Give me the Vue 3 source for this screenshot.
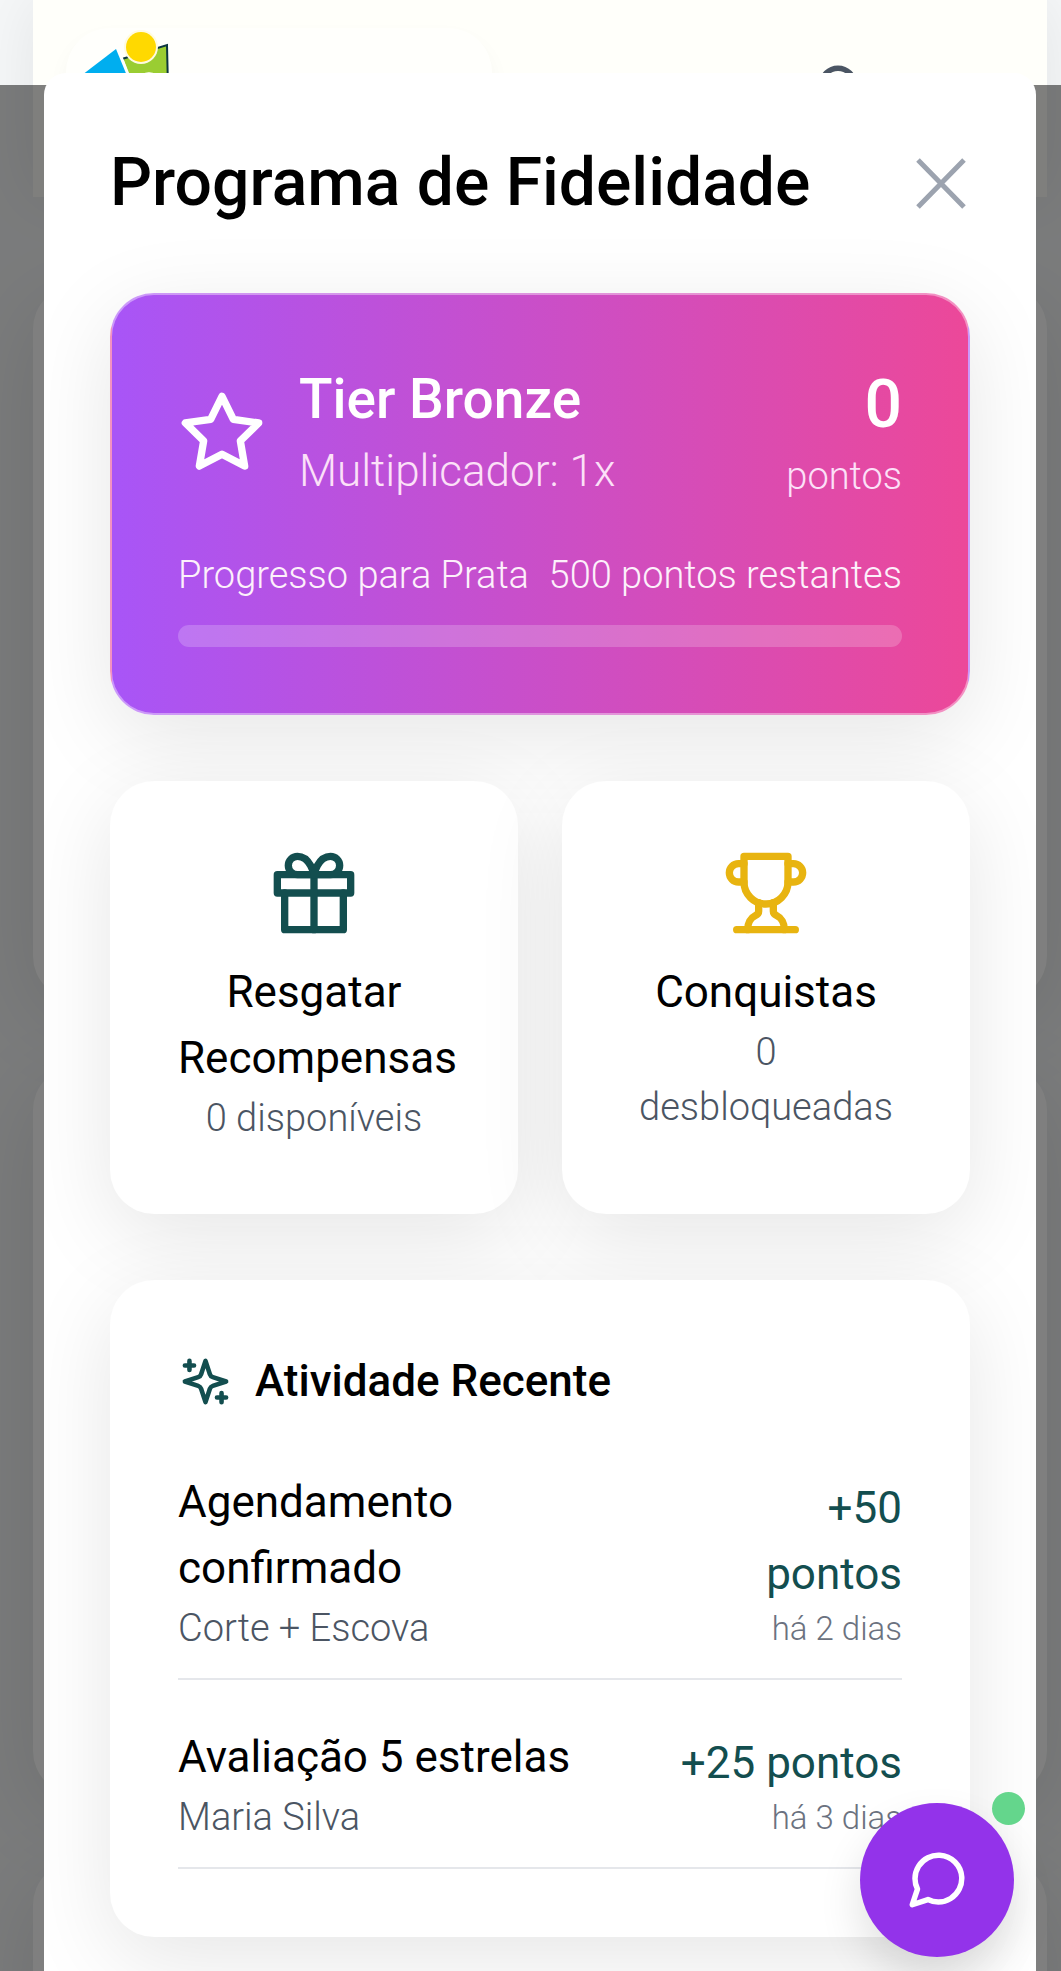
<script setup>
const activities = [
  { title: 'Agendamento confirmado', detail: 'Corte + Escova', points: '+50 pontos', when: 'há 2 dias' },
  { title: 'Avaliação 5 estrelas', detail: 'Maria Silva', points: '+25 pontos', when: 'há 3 dias' },
]
const progress = 0
</script>

<template>
  <div class="screen">
    <div class="page" aria-hidden="true">
      <header class="page-header">
        <div class="logo-card">
          <svg class="logo" viewBox="0 0 110 60">
            <path d="M-17 60 L34 21 L50 60 Z" fill="#00aeef" />
            <path d="M41 30 L85 17 V60 H52 Z" fill="#9acd32" />
            <path d="M40 31 L85 17 L86 60" fill="none" stroke="#0b3540" stroke-width="2" />
            <path d="M36 20 L52 60" stroke="#fff" stroke-width="2" />
            <circle cx="59" cy="19" r="17" fill="#fffbe0" />
            <circle cx="59" cy="19" r="15" fill="#ffd900" />
            <circle cx="67" cy="54" r="10" fill="#f0f8d8" />
          </svg>
        </div>
        <svg class="user" viewBox="0 0 24 24" fill="none" stroke="#4b5563" stroke-width="1.5" stroke-linecap="round">
          <circle cx="12" cy="7" r="4.5" />
          <path d="M19 21v-2a4 4 0 0 0-4-4H9a4 4 0 0 0-4 4v2" />
        </svg>
      </header>
      <section class="page-card first"></section>
      <section class="page-card second"></section>
      <section class="page-card third"></section>
    </div>
    <div class="overlay"></div>

    <main class="dialog" role="dialog" aria-labelledby="dialog-title">
      <div class="dialog-header">
        <h1 id="dialog-title">Programa de Fidelidade</h1>
        <button class="close" type="button" aria-label="Fechar">
          <svg viewBox="0 0 58 68" fill="none" stroke="#9ca3af" stroke-width="5">
            <path d="M6 11 L52 58 M52 11 L6 58" />
          </svg>
        </button>
      </div>

      <section class="card tier">
        <div class="tier-top">
          <div class="tier-info">
            <svg class="icon-lg" viewBox="0 0 24 24" fill="none" stroke="currentColor" stroke-width="2" stroke-linecap="round" stroke-linejoin="round">
              <polygon points="12 2 15.09 8.26 22 9.27 17 14.14 18.18 21.02 12 17.77 5.82 21.02 7 14.14 2 9.27 8.91 8.26 12 2" />
            </svg>
            <div>
              <h2>Tier Bronze</h2>
              <p class="multiplier">Multiplicador: 1x</p>
            </div>
          </div>
          <div class="score">
            <div class="score-value">0</div>
            <div class="score-label">pontos</div>
          </div>
        </div>
        <div class="progress-text">
          <span>Progresso para Prata</span>
          <span>500 pontos restantes</span>
        </div>
        <div class="track"><div class="fill" :style="{ width: progress + '%' }"></div></div>
      </section>

      <div class="tiles">
        <button class="card tile" type="button">
          <svg class="icon-lg teal" viewBox="0 0 24 24" fill="none" stroke="currentColor" stroke-width="2" stroke-linecap="round" stroke-linejoin="round">
            <polyline points="20 12 20 22 4 22 4 12" />
            <rect x="2" y="7" width="20" height="5" />
            <path d="M12 22V7" />
            <path d="M12 7H7.5a2.5 2.5 0 0 1 0-5C11 2 12 7 12 7z" />
            <path d="M12 7h4.500a2.500 2.500 0 0 0 0-5C13 2 12 7 12 7z" />
          </svg>
          <span class="tile-title">Resgatar Recompensas</span>
          <span class="tile-note">0 disponíveis</span>
        </button>
        <button class="card tile" type="button">
          <svg class="icon-lg gold" viewBox="0 0 24 24" fill="none" stroke="currentColor" stroke-width="2" stroke-linecap="round" stroke-linejoin="round">
            <path d="M6 9H4.500a2.500 2.500 0 0 1 0-5H6" />
            <path d="M18 9h1.500a2.500 2.500 0 0 0 0-5H18" />
            <path d="M4 22h16" />
            <path d="M10 14.660V17c0 .55-.47.98-.97 1.210C7.850 18.750 7 20.240 7 22" />
            <path d="M14 14.660V17c0 .55.47.98.97 1.210C16.150 18.750 17 20.240 17 22" />
            <path d="M18 2H6v7a6 6 0 0 0 12 0V2Z" />
          </svg>
          <span class="tile-title">Conquistas</span>
          <span class="tile-note">0 desbloqueadas</span>
        </button>
      </div>

      <section class="card activity">
        <h3>
          <svg class="icon-sm teal" viewBox="0 0 24 24" fill="none" stroke="currentColor" stroke-width="2" stroke-linecap="round" stroke-linejoin="round">
            <path d="m12 3-1.912 5.813a2 2 0 0 1-1.275 1.275L3 12l5.813 1.912a2 2 0 0 1 1.275 1.275L12 21l1.912-5.813a2 2 0 0 1 1.275-1.275L21 12l-5.813-1.912a2 2 0 0 1-1.275-1.275L12 3Z" />
            <path d="M5 3v4M3 5h4M19 17v4M17 19h4" />
          </svg>
          Atividade Recente
        </h3>
        <ul>
          <li v-for="item in activities" :key="item.title">
            <div>
              <p class="item-title">{{ item.title }}</p>
              <p class="item-detail">{{ item.detail }}</p>
            </div>
            <div class="item-side">
              <p class="item-points">{{ item.points }}</p>
              <p class="item-when">{{ item.when }}</p>
            </div>
          </li>
        </ul>
      </section>
    </main>

    <button class="chat" type="button" aria-label="Abrir chat">
      <svg viewBox="0 0 24 24" fill="none" stroke="#fff" stroke-width="2" stroke-linecap="round" stroke-linejoin="round">
        <path d="M21 11.5a8.38 8.38 0 0 1-.9 3.8 8.5 8.5 0 0 1-7.6 4.7 8.38 8.38 0 0 1-3.8-.9L3 21l1.9-5.7a8.38 8.38 0 0 1-.9-3.8 8.5 8.5 0 0 1 4.7-7.6 8.38 8.38 0 0 1 3.8-.9h.5a8.48 8.48 0 0 1 8 8v.5z" />
      </svg>
      <span class="status"></span>
    </button>
  </div>
</template>

<style>
body {
  margin: 0;
  background: #f5f7f8;
}
</style>

<style scoped>
* {
  box-sizing: border-box;
}
h1, h2, h3, p, ul {
  margin: 0;
  padding: 0;
}
button {
  font: inherit;
  border: 0;
  padding: 0;
  cursor: pointer;
}
.screen {
  position: relative;
  height: 100vh;
  overflow: hidden;
  background: #f5f7f8;
  font-family: Roboto, "Noto Sans", sans-serif;
  font-size: 44px;
  line-height: 66px;
  font-weight: 340;
  color: #000;
}
.page {
  position: absolute;
  inset: 0 14px 0 33px;
}
.page-header {
  display: flex;
  justify-content: space-between;
  align-items: flex-start;
  height: 197px;
  padding: 28px 165px 0 33px;
  background: #fffffa;
  box-shadow: 0 0 66px rgba(0, 0, 0, 0.08);
}
.logo-card {
  width: 426px;
  height: 140px;
  padding: 0 16px;
  border-radius: 44px;
  background: #fffffc;
  box-shadow: 0 11px 22px rgba(0, 0, 0, 0.04);
}
.logo {
  display: block;
  width: 110px;
  height: 60px;
}
.user {
  width: 88px;
  height: 88px;
  margin-top: 31px;
}
.page-card {
  border-radius: 44px;
  background: #fefffe;
  box-shadow: 0 22px 88px rgba(0, 0, 0, 0.1);
  margin-top: 66px;
}
.first {
  height: 715px;
  margin-top: 88px;
}
.second {
  height: 729px;
}
.third {
  height: 400px;
}
.overlay {
  position: absolute;
  inset: 85px 0 0;
  background: rgba(0, 0, 0, 0.5);
}
.dialog {
  position: absolute;
  inset: 73px 25px 0 44px;
  padding: 66px;
  overflow: hidden;
  border-radius: 22px 22px 0 0;
  background: #fff;
  display: flex;
  flex-direction: column;
  gap: 66px;
}
.dialog > * {
  flex-shrink: 0;
}
.dialog-header {
  display: flex;
  align-items: center;
  justify-content: space-between;
}
h1 {
  font-size: 66px;
  line-height: 88px;
  font-weight: 500;
}
.close {
  background: none;
}
.close svg {
  display: block;
  width: 58px;
  height: 68px;
}
.card {
  border: 2px solid rgba(255, 255, 255, 0.4);
  border-radius: 44px;
  padding: 66px;
  background-color: #fff;
  box-shadow: 0 22px 88px rgba(0, 0, 0, 0.1);
}
.icon-lg {
  display: block;
  flex: none;
  width: 88px;
  height: 88px;
}
.icon-sm {
  flex: none;
  width: 55px;
  height: 55px;
}
.teal {
  color: #134e4f;
}
.gold {
  color: #e8b410;
}
.tier {
  background: linear-gradient(to right, #a855f7, #ec4899);
  color: #fff;
}
.tier-top {
  display: flex;
  align-items: center;
  justify-content: space-between;
  margin-bottom: 44px;
}
.tier-info {
  display: flex;
  align-items: center;
  gap: 33px;
}
h2 {
  font-size: 55px;
  line-height: 77px;
  font-weight: 500;
}
.multiplier,
.score-label {
  color: #fce0f8;
}
.score {
  text-align: right;
}
.score-value {
  font-size: 66px;
  line-height: 88px;
  font-weight: 500;
}
.score-label,
.progress-text,
.tile-note,
.item-detail {
  font-size: 38px;
  line-height: 55px;
}
.progress-text {
  display: flex;
  justify-content: space-between;
  margin-bottom: 22px;
  white-space: nowrap;
  color: #fdf0fb;
}
.track {
  height: 22px;
  border-radius: 11px;
  background: rgba(255, 255, 255, 0.2);
  overflow: hidden;
}
.fill {
  height: 100%;
  background: #fff;
}
.tiles {
  display: grid;
  grid-template-columns: repeat(2, minmax(0, 1fr));
  gap: 44px;
}
.tile {
  display: flex;
  flex-direction: column;
  align-items: stretch;
  text-align: center;
  color: #000;
}
.tile svg {
  align-self: center;
  margin-bottom: 22px;
}
.tile-title {
  font-weight: 400;
}
.tile-note,
.item-detail {
  color: #4b5563;
}
h3 {
  display: flex;
  align-items: center;
  gap: 22px;
  margin-bottom: 33px;
  font-size: 44px;
  line-height: 66px;
  font-weight: 500;
}
ul {
  display: flex;
  flex-direction: column;
  gap: 22px;
  list-style: none;
}
li {
  display: flex;
  align-items: center;
  justify-content: space-between;
  padding: 22px 0;
  border-bottom: 2px solid #e5e7eb;
}
.item-title {
  font-weight: 400;
}
.item-side {
  text-align: right;
}
.item-points {
  font-weight: 400;
  color: #134e4f;
}
.item-when {
  font-size: 33px;
  line-height: 44px;
  color: #6b7280;
}
.chat {
  position: absolute;
  right: 47px;
  bottom: 14px;
  display: grid;
  place-items: center;
  width: 154px;
  height: 154px;
  border-radius: 50%;
  background: #9333ea;
  box-shadow: 0 22px 44px rgba(0, 0, 0, 0.12);
}
.chat > svg {
  width: 66px;
  height: 66px;
}
.status {
  position: absolute;
  top: -11px;
  right: -11px;
  width: 33px;
  height: 33px;
  border-radius: 50%;
  background: #64d68c;
}
</style>
